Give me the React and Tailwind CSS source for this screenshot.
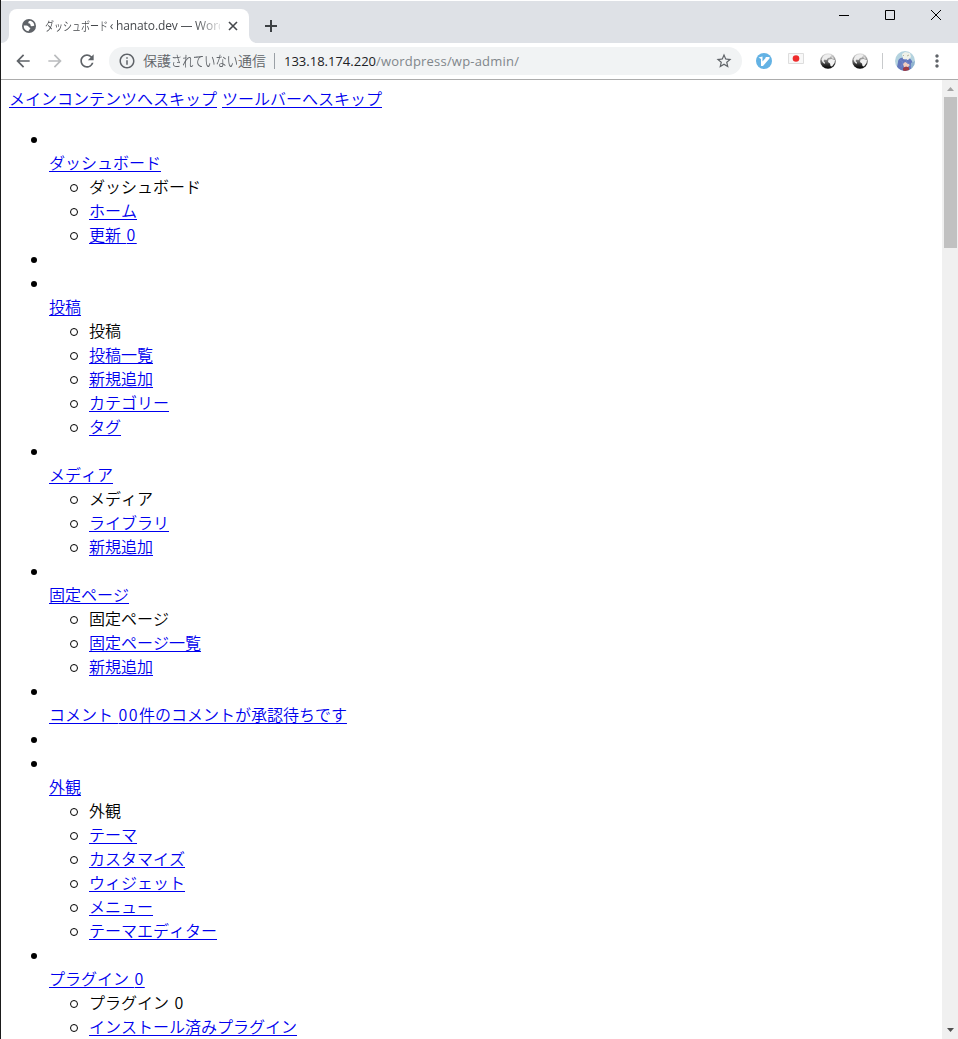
import { MdArrowBack, MdArrowForward, MdRefresh, MdStarBorder, MdInfoOutline, MdMoreVert } from 'react-icons/md';

const menu = [
  { title: 'ダッシュボード', items: ['ダッシュボード', 'ホーム', '更新 0'] },
  null,
  { title: '投稿', items: ['投稿', '投稿一覧', '新規追加', 'カテゴリー', 'タグ'] },
  { title: 'メディア', items: ['メディア', 'ライブラリ', '新規追加'] },
  { title: '固定ページ', items: ['固定ページ', '固定ページ一覧', '新規追加'] },
  { title: 'コメント 00件のコメントが承認待ちです', items: [] },
  null,
  { title: '外観', items: ['外観', 'テーマ', 'カスタマイズ', 'ウィジェット', 'メニュー', 'テーマエディター'] },
  { title: 'プラグイン 0', items: ['プラグイン 0', 'インストール済みプラグイン'] },
];

const Label = ({ text }) =>
  text.split(/(\d+)/).map((part, i) =>
    /^\d+$/.test(part) ? <span key={i} className="pl-[0.6px] tracking-[1.4px]">{part}</span> : part
  );

const Link = ({ text }) => (
  <a href="#" className="text-[#0000ee] underline decoration-1 underline-offset-[2px] [text-decoration-skip-ink:none]">
    <Label text={text} />
  </a>
);

const TabStrip = () => (
  <div className="h-[42px] mt-px bg-[#dee1e6] flex items-start">
    <div className="w-2 h-full flex items-end">
      <svg className="w-2 h-2" viewBox="0 0 8 8"><path d="M8 0v8H0a8 8 0 0 0 8-8z" fill="#fff" /></svg>
    </div>
    <div className="mt-2 w-60 h-[34px] bg-white rounded-t-lg flex items-center pl-[13px]">
      <svg className="w-[14px] h-[14px] shrink-0" viewBox="0 0 14 14">
        <circle cx="7" cy="7" r="7" fill="#5f6368" />
        <path d="M8.3 1.8C6.9 2.2 6 2.9 6.4 4c.4.8 1.6.5 1.900 1.300.3 1 .1 1.700 1.300 1.900 1 .2 1.700-.5 2.700-.4A5.400 5.400 0 0 0 8.300 1.800z" fill="#fff" />
        <path d="M1.700 6.600c1.500 0 3.300-.1 4.300.5.800.5.600 1.300 1.500 1.500.8.200 1 .7.600 1.400-.4.600-1.300.6-1.500 2.200A5.300 5.300 0 0 1 1.700 6.600z" fill="#fff" />
      </svg>
      <div className="ml-[9px] w-[175px] h-5 flex items-center leading-5 whitespace-pre text-xs text-[#45484c] [mask-image:linear-gradient(to_right,black_150px,transparent_180px)]">
        <span className="w-[62px] shrink-0"><span className="inline-block origin-left scale-x-[0.75] font-[350]">ダッシュボード</span></span>
        <span className="font-['Open_Sans'] tracking-[-0.1px] [word-spacing:-0.3px]"> ‹ hanato.dev — Word</span>
      </div>
      <svg className="ml-2 w-[10px] h-[10px]" viewBox="0 0 10 10" stroke="#45484c" strokeWidth="1.6"><path d="M1 1l8 8M9 1l-8 8" /></svg>
    </div>
    <div className="w-2 h-full flex items-end">
      <svg className="w-2 h-2" viewBox="0 0 8 8"><path d="M0 0v8h8a8 8 0 0 1-8-8z" fill="#fff" /></svg>
    </div>
    <svg className="mt-[19px] ml-2 w-3 h-3" viewBox="0 0 12 12" stroke="#3c4043" strokeWidth="2"><path d="M6 0v12M0 6h12" /></svg>
    <div className="ml-auto mr-[17px] mt-[9px] flex gap-9 text-black">
      <svg className="w-[10px] h-[10px]" viewBox="0 0 10 10" stroke="currentColor"><path d="M0 5.5h10" /></svg>
      <svg className="w-[10px] h-[10px]" viewBox="0 0 10 10" fill="none" stroke="currentColor"><path d="M.5.5h9v9h-9z" /></svg>
      <svg className="w-[10px] h-[10px]" viewBox="0 0 10 10" stroke="currentColor"><path d="M0 0l10 10M10 0L0 10" /></svg>
    </div>
  </div>
);

const GlobeIcon = () => (
  <svg className="w-4 h-4" viewBox="0 0 16 16">
    <defs>
      <linearGradient id="globe" x1="0" y1="0" x2="0" y2="1">
        <stop offset="0" stopColor="#e4e4e4" />
        <stop offset="0.35" stopColor="#9c9c9c" />
        <stop offset="0.75" stopColor="#2c2c2c" />
        <stop offset="1" stopColor="#000" />
      </linearGradient>
    </defs>
    <circle cx="8" cy="8" r="7.8" fill="url(#globe)" />
    <path d="M3 3.5C5 1 9 .5 11.5 2L10 4.5 8 5 6.500 7 4.500 6.500 3.500 8 5 9.500 4.500 11 2.500 9 1.500 6.500z" fill="#eee" />
    <path d="M8.5 6.5l3-.5 3.500 1-.5 3-2.500 3.500-1.500-.5-.5-2.500-2-1.500z" fill="#f2f2f2" />
    <path d="M11 3l2 1 1 2-2-.5z" fill="#ddd" />
  </svg>
);

const Toolbar = () => (
  <div className="h-[37px] border-b border-[#acacac] flex items-center text-[#5f6368]">
    <MdArrowBack className="ml-3 w-5 h-5" />
    <MdArrowForward className="ml-3 w-5 h-5 text-[#babcbe]" />
    <MdRefresh className="ml-3 w-5 h-5" />
    <div className="ml-3 w-[633px] h-7 rounded-full bg-[#f1f3f4] flex items-center text-sm whitespace-nowrap">
      <MdInfoOutline className="ml-[9px] w-[18px] h-[18px]" />
      <div className="ml-[7px] w-[122px] flex font-[350] pb-0.5">
        <span>保護</span>
        <span className="w-[67px]"><span className="inline-block origin-left scale-x-[0.8]">されていない</span></span>
        <span>通信</span>
      </div>
      <div className="ml-[9px] w-px h-4 bg-[#9aa0a6]" />
      <span className="ml-[9px] font-['Open_Sans'] text-[13px] text-[#80868b] tracking-[0.2px]"><span className="text-[#202124] tracking-normal">133.18.174.220</span>/wordpress/wp-admin/</span>
      <MdStarBorder className="ml-auto mr-[9px] w-[18px] h-[18px]" />
    </div>
    <svg className="ml-[14px] w-4 h-4" viewBox="0 0 16 16">
      <circle cx="8" cy="8" r="8" fill="#63b2e4" />
      <path d="M2.5 4.5L6.5 3.5v5L10 4.5 9 4h4.500v1.500L7 13H5V6z" fill="#fff" />
    </svg>
    <svg className="ml-4 w-4 h-4" viewBox="0 0 16 16">
      <path d="M.5.5h15v10H.5z" fill="#f8f8f8" stroke="#ddd" />
      <circle cx="8" cy="5.5" r="3.3" fill="#ee2b2b" />
    </svg>
    <div className="ml-4 flex gap-4"><GlobeIcon /><GlobeIcon /></div>
    <div className="ml-[14px] w-px h-4 bg-[#c8cacc]" />
    <svg className="ml-3 w-5 h-5" viewBox="0 0 20 20">
      <defs>
        <clipPath id="avatar"><circle cx="10" cy="10" r="10" /></clipPath>
      </defs>
      <g clipPath="url(#avatar)">
        <path d="M0 0h20v20H0z" fill="#b4d3df" />
        <path d="M3 11c0-4 4-5 8-4.5 5 0 7 4 7 8l-3 5.5H5l-3-4z" fill="#6478bd" />
        <path d="M7 3l3-2 5 1 1 4-3 3-5-1z" fill="#f0f1e9" />
        <path d="M8 4l1 1M12 5l2-1" stroke="#b2b49f" />
        <path d="M8 13l2-2 3 1 2 2-2 2H9z" fill="#f0cdbf" />
        <path d="M8 17l3-1.5 3 1V20H8z" fill="#a03c43" />
        <path d="M5 9l3 2-2 5M11 8l1 4 3 1 1 4" fill="none" stroke="#6f83c8" />
        <path d="M16 12l4-2v8l-4 2z" fill="#8fb3cf" />
      </g>
    </svg>
    <MdMoreVert className="ml-3 w-5 h-5" />
  </div>
);

const MenuEntry = ({ entry }) => (
  <li>
    <div className="h-6 flex items-center">
      <span className="-ml-[18px] w-1.5 h-1.5 rounded-full bg-black" />
    </div>
    {entry && (
      <>
        <div className="h-6"><Link text={entry.title} /></div>
        <ul className="pl-10">
          {entry.items.map((item, index) => (
            <li key={index} className="h-6 flex items-start">
              <span className="-ml-[19px] mr-[11px] mt-2 w-2 h-2 rounded-full border border-black shrink-0" />
              <span>{index === 0 ? <Label text={item} /> : <Link text={item} />}</span>
            </li>
          ))}
        </ul>
      </>
    )}
  </li>
);

const Scrollbar = () => (
  <div className="w-4 bg-[#f0f0f0] flex flex-col items-center shrink-0">
    <svg className="h-[17px] w-4" viewBox="0 0 16 17"><path d="M5 11h7L8.5 7z" fill="#a3a3a3" /></svg>
    <div className="w-[13px] h-[151px] ml-px bg-[#c1c1c1]" />
    <svg className="mt-auto h-[17px] w-4" viewBox="0 0 16 17"><path d="M5 6h7l-3.5 4z" fill="#505050" /></svg>
  </div>
);

export default function App() {
  return (
    <div className="h-[1039px] w-[958px] flex flex-col bg-white border-l border-[#1b1b1b] overflow-hidden font-['Noto_Sans_CJK_JP',sans-serif]">
      <TabStrip />
      <Toolbar />
      <div className="flex-1 min-h-0 flex">
        <main className="flex-1 p-2 overflow-hidden text-base leading-5 font-[350] text-black [word-spacing:1.4px] [font-kerning:none]">
          <div className="h-6 whitespace-nowrap">
            <Link text="メインコンテンツへスキップ" /> <Link text="ツールバーへスキップ" />
          </div>
          <ul className="mt-4 pl-10 whitespace-nowrap">
            {menu.map((entry, index) => <MenuEntry key={index} entry={entry} />)}
          </ul>
        </main>
        <Scrollbar />
      </div>
    </div>
  );
}
